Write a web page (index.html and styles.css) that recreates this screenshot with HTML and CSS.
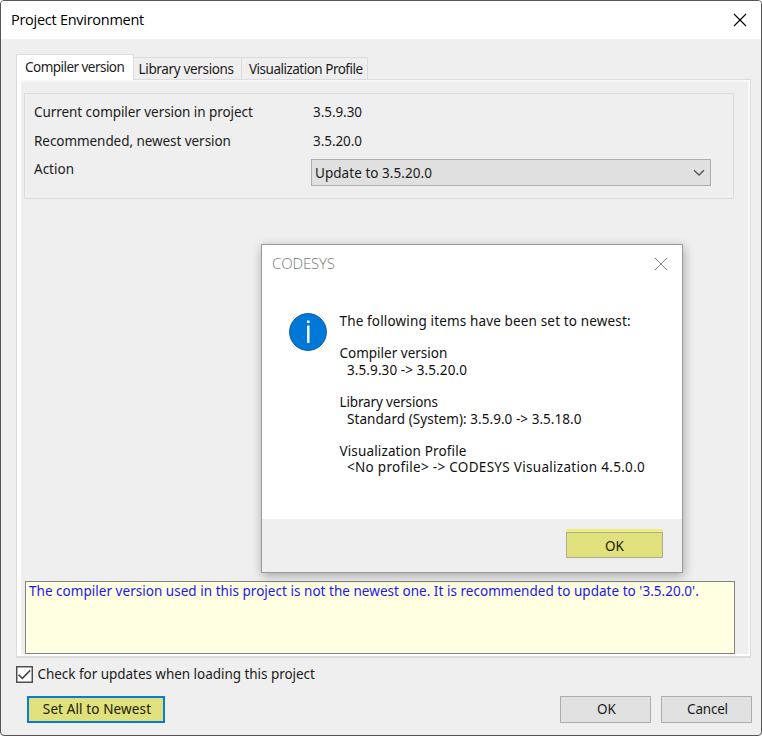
FILE: index.html
```html
<!DOCTYPE html>
<html lang="en">
<head>
<meta charset="utf-8">
<title>Project Environment</title>
<link rel="stylesheet" href="styles.css">
</head>
<body>
<main class="window">
  <header class="titlebar">
    <h1 class="title">Project Environment</h1>
    <svg class="close" width="14" height="14" viewBox="0 0 14 14"><path d="M1 1L13 13M13 1L1 13"/></svg>
  </header>
  <nav class="tabs">
    <div class="tab active"><span class="t-compiler">Compiler version</span></div>
    <div class="tab library"><span class="t-library">Library versions</span></div>
    <div class="tab visual"><span class="t-visual">Visualization Profile</span></div>
  </nav>
  <section class="panel">
    <div class="page">
      <div class="group">
        <div class="row"><span class="label t-current">Current compiler version in project</span><span class="t-v1">3.5.9.30</span></div>
        <div class="row"><span class="label t-recommended">Recommended, newest version</span><span class="t-v2">3.5.20.0</span></div>
        <div class="row action"><span class="label t-action">Action</span>
          <div class="select"><span class="t-update">Update to 3.5.20.0</span>
            <svg width="12" height="8" viewBox="0 0 12 8"><path d="M1 1.2L6 6L11 1.2"/></svg>
          </div>
        </div>
      </div>
      <div class="message"><span class="t-message">The compiler version used in this project is not the newest one. It is recommended to update to '3.5.20.0'.</span></div>
    </div>
  </section>
  <div class="check">
    <svg width="17" height="17" viewBox="0 0 17 17"><rect x=".75" y=".75" width="15.5" height="15.5"/><path d="M2.5 8.7L6.3 12.4L14.2 4.4"/></svg>
    <span class="t-check">Check for updates when loading this project</span>
  </div>
  <footer class="buttons">
    <div class="button primary"><span class="t-set">Set All to Newest</span></div>
    <div class="button"><span class="t-ok">OK</span></div>
    <div class="button"><span class="t-cancel">Cancel</span></div>
  </footer>
</main>
<section class="dialog">
  <header class="dialog-head">
    <h2 class="dialog-title">CODESYS</h2>
    <svg class="close muted" width="14" height="14" viewBox="0 0 14 14"><path d="M1 1L13 13M13 1L1 13"/></svg>
  </header>
  <div class="dialog-body">
    <svg class="info" width="38" height="38" viewBox="0 0 38 38"><circle cx="19" cy="19" r="18.4"/><path d="M19.3 12.5V30"/><path d="M19.3 7.5V10"/></svg>
    <div class="items">
      <p><span class="t-following">The following items have been set to newest:</span></p>
      <p><span class="t-dcompiler">Compiler version</span></p>
      <p class="value"><span class="t-d1">3.5.9.30 -&gt; 3.5.20.0</span></p>
      <p><span class="t-dlibrary">Library versions</span></p>
      <p class="value"><span class="t-d2">Standard (System): 3.5.9.0 -&gt; 3.5.18.0</span></p>
      <p><span class="t-dvisual">Visualization Profile</span></p>
      <p class="value"><span class="t-d3">&lt;No profile&gt; -&gt; CODESYS Visualization 4.5.0.0</span></p>
    </div>
  </div>
  <footer class="dialog-foot"><div class="highlight"><div class="button highlighted"><span class="t-dok">OK</span></div></div></footer>
</section>
</body>
</html>
```
FILE: styles.css
```css
* { box-sizing: border-box; }
body { margin: 0; background: #fff; font: 13.5px/16px "Noto Sans", "Open Sans", sans-serif; color: #1c1c1c; }
h1, h2, p { margin: 0; font-weight: 400; }
span { white-space: nowrap; }
svg { display: block; flex: none; fill: none; }
.window { width: 762px; height: 736px; border: 1px solid #555; border-radius: 4px; background: #efefef; overflow: hidden; }
.titlebar { height: 38px; background: #fff; display: flex; justify-content: space-between; align-items: center; padding: 0 14px 0 10px; }
.title { font: 14.5px/20px "Open Sans", sans-serif; letter-spacing: -.27px; color: #000; white-space: nowrap; }
.close path { stroke: #000; stroke-width: 1.1; }
.close.muted path { stroke: #888; stroke-width: 1; }
.tabs { height: 26px; margin: 15px 0 0 15px; display: flex; align-items: flex-end; position: relative; }
.tab { height: 23px; border: 1px solid #dcdcdc; border-left: 0; display: flex; align-items: center; padding-left: 7px; }
.tab.active { width: 118px; height: 26px; border: 1px solid #dcdcdc; border-bottom: 0; background: #fff; padding: 0 0 2px 8px; }
.tab.library { width: 108px; padding-left: 4.5px; }
.tab.visual { width: 126px; }
.panel { margin-left: 15px; width: 735px; height: 579px; margin-top: -1px; border: 1px solid #dcdcdc; border-width: 1px 1px 2px; background: #fff; padding: 0 0 2px 4px; }
.page { height: 100%; border: solid #f8f8f8; border-width: 2px 2px 0 0; background: #efefef; padding: 11px 0 0 3px; display: flex; flex-direction: column; justify-content: space-between; }
.group { height: 106px; border: 1px solid #dcdcdc; padding: 10px 22px 0 9px; display: grid; grid-template-rows: 29px 29px 27px; width: 710px; }
.row { display: flex; align-items: flex-start; }
.label { width: 279px; flex: none; }
.select { width: 400px; height: 27px; margin: -3px 0 0 -2px; border: 1px solid #adadad; background: #e0e0e0; display: flex; align-items: center; justify-content: space-between; padding: 0 5px 0 3px; flex: none; }
.t-action { margin-top: -1px; }
.select svg path { stroke: #555; stroke-width: 1.3; }
.message { margin-left: 1px; width: 710px; height: 73px; border: 1px solid #828282; background: #ffffe1; color: #2118ee; padding: 1px 3px; }
.check { margin: 8px 0 0 15px; display: flex; gap: 4.5px; height: 17px; }
.check rect { fill: #fff; stroke: #444; stroke-width: 1.4; }
.check path { stroke: #444; stroke-width: 1.5; }
.buttons { display: flex; margin: 13px 9px 0 26px; gap: 10px; }
.button { width: 91px; height: 27px; border: 1px solid #adadad; background: #e1e1e1; display: flex; justify-content: center; align-items: center; padding: 0 0 2px 2px; }
.button.primary { width: 138px; margin-right: auto; border: 2px solid #087cd0; background: #e0e07c; color: #202000; }
.dialog { position: absolute; left: 261px; top: 244px; width: 422px; height: 329px; border: 1px solid #999; background: #fff; box-shadow: 1px 3px 10px rgba(0,0,0,.3); display: flex; flex-direction: column; color: #111; }
.dialog-head { height: 38px; display: flex; justify-content: space-between; align-items: center; padding: 0 14px 0 10px; }
.dialog-title { font: 300 15px/20px "Open Sans", sans-serif; letter-spacing: -.15px; color: #777; padding-bottom: 2px; }
.dialog-body { flex: 1; display: flex; gap: 12.5px; padding: 30px 0 0 27px; }
.items { line-height: 16.3px; }
.items p { height: 16.3px; }
.items p:first-child, .items .value { margin-bottom: 16.2px; }
.items .value { padding-left: 7.5px; }
.info circle { fill: #0078d7; stroke: #075ca4; stroke-width: 1; }
.info path { stroke: #fff; stroke-width: 2.4; }
.dialog-foot { height: 53px; background: #efefef; padding: 10px 19px 0 0; display: flex; justify-content: flex-end; }
.highlight { height: 29px; padding-top: 3px; background: #eded80; }
.button.highlighted { width: 97px; height: 26px; background: #e0e07c; border-color: #adad90; padding: 1px 0 0; color: #202000; }

.t-compiler { letter-spacing: -.53px; }
.t-library { letter-spacing: -.34px; }
.t-visual { letter-spacing: -.5px; }
.t-current, .t-recommended { letter-spacing: -.06px; }
.t-v1, .t-v2 { letter-spacing: -.06px; }
.t-update { letter-spacing: .05px; }
.t-message { letter-spacing: .03px; }
.t-check { letter-spacing: -.04px; }
.t-set { letter-spacing: .12px; }
.t-cancel { letter-spacing: -.2px; }
.t-following { letter-spacing: .15px; }
.t-dcompiler { letter-spacing: 0; }
.t-d1 { letter-spacing: .1px; }
.t-dlibrary { letter-spacing: -.15px; }
.t-d2 { letter-spacing: .05px; }
.t-dvisual { letter-spacing: .14px; }
.t-d3 { letter-spacing: .3px; }
```
